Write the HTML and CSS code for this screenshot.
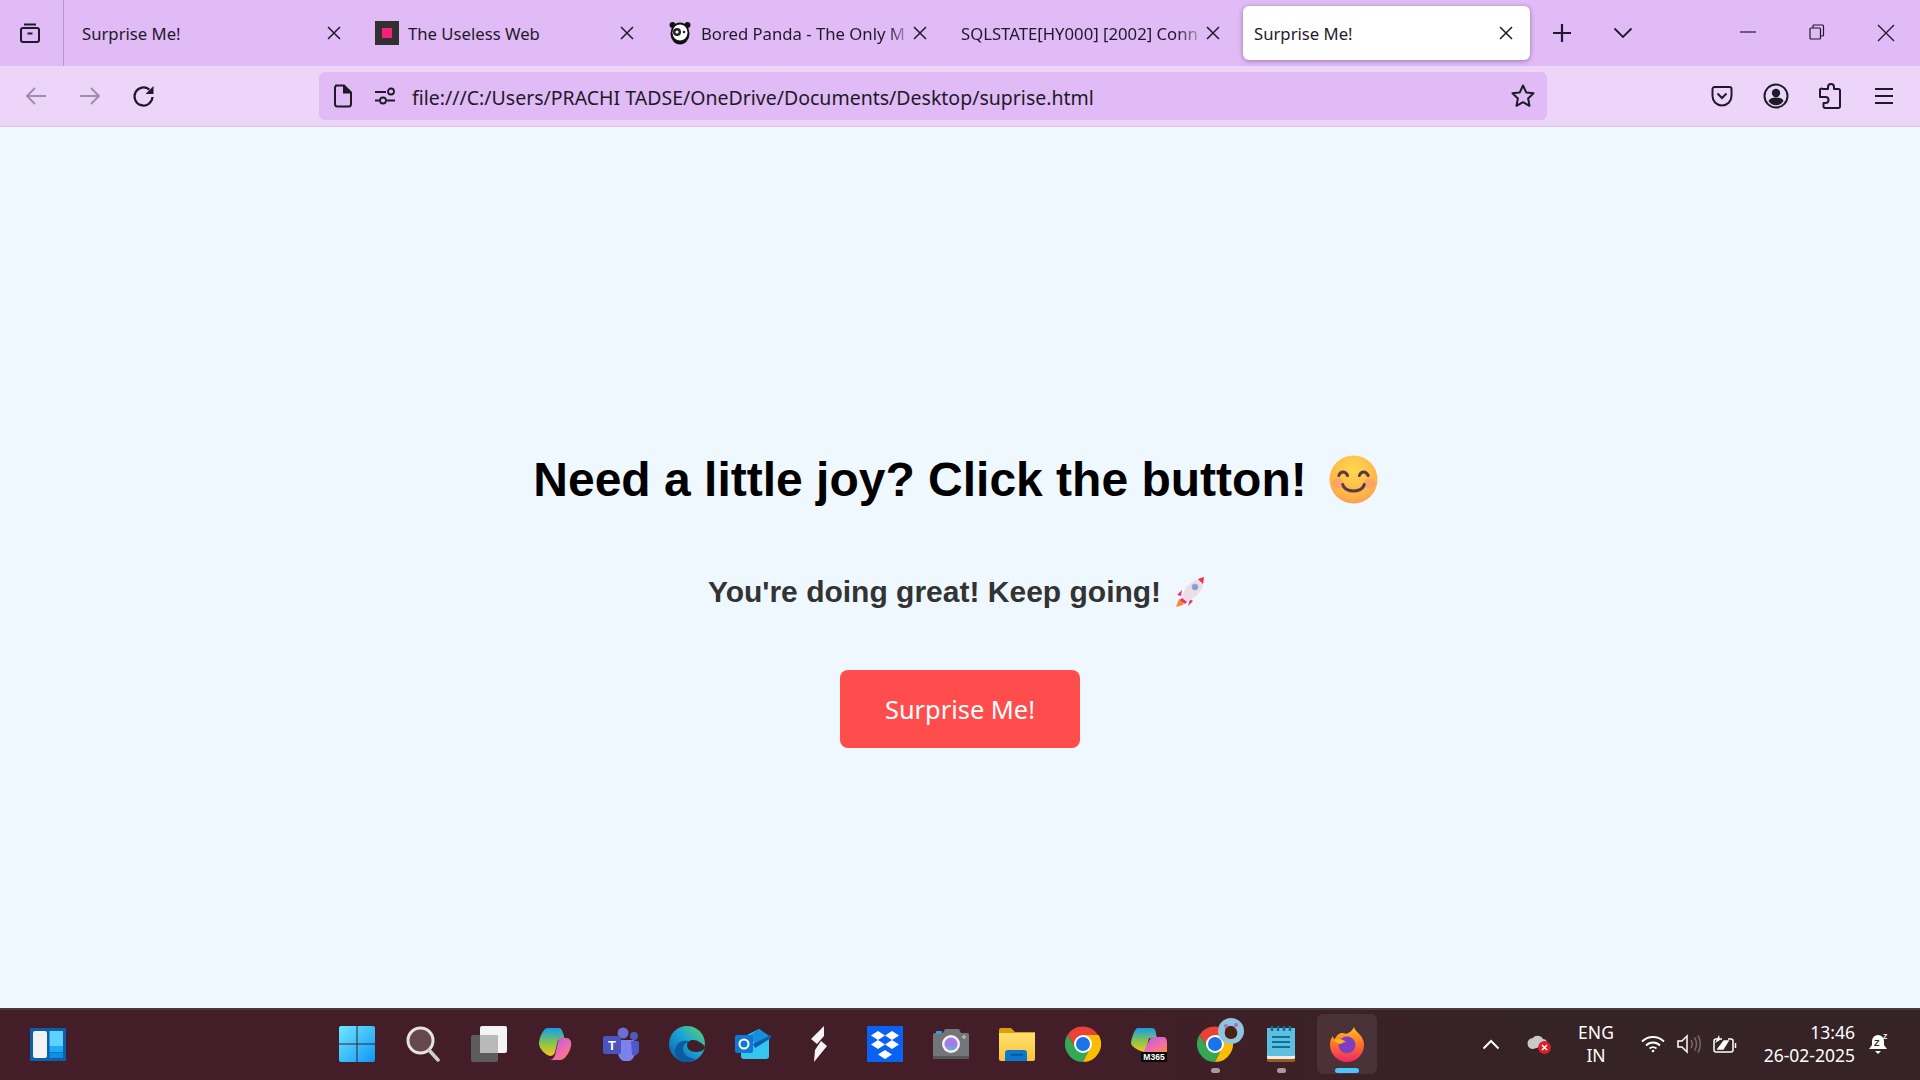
FILE: index.html
```html
<!DOCTYPE html>
<html>
<head>
    <title>Surprise Me!</title>
    <link rel="stylesheet" href="styles.css">
</head>
<body>
    <svg class="defs" width="0" height="0">
        <defs>
            <symbol id="closeX" viewBox="0 0 14 14"><path d="M1 1l12 12M13 1L1 13" fill="none" stroke="currentColor" stroke-width="1.5"/></symbol>
            <symbol id="chromeLogo" viewBox="0 0 36 36">
                <path d="M18 18V10H33.6A18 18 0 0 0 2.4 9L11 22Z" fill="#ea4335"/>
                <path d="M2.4 9A18 18 0 0 0 18 36L25 22H11Z" fill="#34a853"/>
                <path d="M33.6 9H18V18L25 22L18 36A18 18 0 0 0 33.6 9Z" fill="#fbbc04"/>
                <circle cx="18" cy="18" r="9" fill="#fff"/>
                <circle cx="18" cy="18" r="7" fill="#1a73e8"/>
            </symbol>
            <linearGradient id="winBlue" x1="0" y1="0" x2="1" y2="1"><stop offset="0" stop-color="#6fe8ff"/><stop offset="1" stop-color="#0f97f5"/></linearGradient>
            <linearGradient id="copilotLeft" x1="0" y1="0" x2="0" y2="1"><stop offset="0" stop-color="#0f9ff0"/><stop offset=".55" stop-color="#8bc34a"/><stop offset="1" stop-color="#f5c518"/></linearGradient>
            <linearGradient id="copilotRight" x1="0" y1="0" x2="1" y2="1"><stop offset="0" stop-color="#a45fe0"/><stop offset=".6" stop-color="#f06ab0"/><stop offset="1" stop-color="#ff8a3c"/></linearGradient>
            <linearGradient id="edgeGrad" x1="0" y1="1" x2="1" y2="0"><stop offset="0" stop-color="#0c59a4"/><stop offset=".55" stop-color="#1ba5d8"/><stop offset="1" stop-color="#5fd660"/></linearGradient>
            <linearGradient id="folderGrad" x1="0" y1="0" x2="0" y2="1"><stop offset="0" stop-color="#ffdf70"/><stop offset="1" stop-color="#fcc437"/></linearGradient>
            <linearGradient id="foxGrad" x1="0" y1="0" x2="0" y2="1"><stop offset="0" stop-color="#ffc21f"/><stop offset=".55" stop-color="#ff6a2a"/><stop offset="1" stop-color="#f0246b"/></linearGradient>
            <radialGradient id="smileGrad" cx=".5" cy=".3" r=".8"><stop offset="0" stop-color="#ffd84f"/><stop offset=".7" stop-color="#ffb347"/><stop offset="1" stop-color="#f98a6a"/></radialGradient>
        </defs>
    </svg>

    <div class="tabbar">
        <div class="tab-view">
            <svg width="24" height="24" viewBox="0 0 24 24" fill="none" stroke="currentColor" stroke-width="2"><path d="M6 3.500h12M3 9a2 2 0 0 1 2-2h14a2 2 0 0 1 2 2v10a2 2 0 0 1-2 2H5a2 2 0 0 1-2-2z"/><path d="M9.500 12.500h5"/></svg>
        </div>
        <div class="tabs">
            <div class="tab"><span class="tab-title">Surprise Me!</span><svg class="tab-close" width="14" height="14"><use href="#closeX"/></svg></div>
            <div class="tab">
                <svg class="favicon" width="24" height="24" viewBox="0 0 24 24"><rect width="24" height="24" fill="#333033"/><rect x="7" y="7" width="10" height="10" fill="#f3237d"/></svg>
                <span class="tab-title">The Useless Web</span><svg class="tab-close" width="14" height="14"><use href="#closeX"/></svg>
            </div>
            <div class="tab">
                <svg class="favicon" width="24" height="24" viewBox="0 0 24 24"><circle cx="4.500" cy="4" r="3" fill="#111"/><circle cx="19.500" cy="4" r="3" fill="#111"/><ellipse cx="12" cy="12.500" rx="9.500" ry="11" fill="#111"/><ellipse cx="12" cy="11.500" rx="7.500" ry="8" fill="#fff"/><circle cx="9" cy="11" r="4" fill="#222"/><circle cx="9" cy="11" r="1.600" fill="#fff"/><circle cx="16" cy="11" r="1.300" fill="#222"/></svg>
                <span class="tab-title fade">Bored Panda - The Only M</span><svg class="tab-close" width="14" height="14"><use href="#closeX"/></svg>
            </div>
            <div class="tab"><span class="tab-title fade">SQLSTATE[HY000] [2002] Conn</span><svg class="tab-close" width="14" height="14"><use href="#closeX"/></svg></div>
            <div class="tab tab-active"><span class="tab-title">Surprise Me!</span><svg class="tab-close" width="14" height="14"><use href="#closeX"/></svg></div>
        </div>
        <div class="tab-new">
            <svg width="20" height="20" viewBox="0 0 20 20"><path d="M10 1v18M1 10h18" stroke="currentColor" stroke-width="2.200"/></svg>
        </div>
        <div class="tab-list">
            <svg width="20" height="12" viewBox="0 0 20 12"><path d="M1.500 1.500L10 10l8.500-8.500" fill="none" stroke="currentColor" stroke-width="1.800"/></svg>
        </div>
        <div class="window-btns">
            <div class="window-btn"><svg width="16" height="16" viewBox="0 0 16 16"><path d="M0 8h16" stroke="currentColor" stroke-width="1.200"/></svg></div>
            <div class="window-btn"><svg width="16" height="16" viewBox="0 0 16 16" fill="none" stroke="currentColor" stroke-width="1.200"><rect x="1" y="4" width="10.500" height="11" rx="1"/><path d="M4 4V2a1 1 0 0 1 1-1h8.500a1 1 0 0 1 1 1v9a1 1 0 0 1-1 1h-2"/></svg></div>
            <div class="window-btn"><svg width="18" height="18" viewBox="0 0 18 18"><path d="M1 1l16 16M17 1L1 17" stroke="currentColor" stroke-width="1.300"/></svg></div>
        </div>
    </div>

    <div class="toolbar">
        <div class="tool-btn tool-off"><svg width="22" height="20" viewBox="0 0 22 20" fill="none" stroke="currentColor" stroke-width="2"><path d="M21 10H2M10 2l-8 8 8 8"/></svg></div>
        <div class="tool-btn tool-off"><svg width="22" height="20" viewBox="0 0 22 20" fill="none" stroke="currentColor" stroke-width="2"><path d="M1 10h19M12 2l8 8-8 8"/></svg></div>
        <div class="tool-btn"><svg width="24" height="24" viewBox="0 0 24 24"><path d="M20.500 13a9 9 0 1 1-3.200-7.400" fill="none" stroke="currentColor" stroke-width="2.200"/><path d="M21.500 2v8h-8z" fill="currentColor"/></svg></div>

        <div class="urlbar">
            <svg class="url-icon" width="20" height="24" viewBox="0 0 20 24" fill="none" stroke="currentColor" stroke-width="2"><path d="M3 1.500h8l7 7V20a2.500 2.500 0 0 1-2.500 2.500h-11A2.500 2.500 0 0 1 2 20V3.500z"/><path d="M11 1.500V8.500h7" fill="currentColor"/></svg>
            <svg class="url-icon url-perm" width="22" height="18" viewBox="0 0 22 18" fill="none" stroke="currentColor" stroke-width="1.800"><path d="M1 5h11M1 13.500h4.500M12.500 13.500H21"/><circle cx="17" cy="4.500" r="3"/><circle cx="9" cy="13.500" r="3"/></svg>
            <span class="url-text">file:///C:/Users/PRACHI TADSE/OneDrive/Documents/Desktop/suprise.html</span>
            <svg width="26" height="26" viewBox="0 0 26 26"><path d="M13 2.500l3.200 6.900 7.300.9-5.400 5.100 1.400 7.400L13 19.200l-6.500 3.600 1.400-7.400-5.400-5.100 7.300-.9z" fill="none" stroke="currentColor" stroke-width="2" stroke-linejoin="round"/></svg>
        </div>

        <div class="tool-right">
            <div class="tool-btn"><svg width="22" height="22" viewBox="0 0 22 22" fill="none" stroke="currentColor" stroke-width="2"><path d="M3.500 2h15A2 2 0 0 1 20.500 4v7a9.500 9.500 0 0 1-19 0V4a2 2 0 0 1 2-2z"/><path d="M6.500 8.500L11 13l4.500-4.500"/></svg></div>
            <div class="tool-btn"><svg width="26" height="26" viewBox="0 0 26 26"><circle cx="13" cy="13" r="11.500" fill="none" stroke="currentColor" stroke-width="2"/><circle cx="13" cy="10" r="4.200" fill="currentColor"/><path d="M5.500 18c1-2.500 4-3.500 7.500-3.500s6.500 1 7.500 3.500c-2 3-4.500 4.200-7.500 4.200S7.500 21 5.500 18z" fill="currentColor"/></svg></div>
            <div class="tool-btn"><svg width="22" height="26" viewBox="0 0 22 26" fill="none" stroke="currentColor" stroke-width="2" stroke-linejoin="round"><path d="M9 6V4a3 3 0 0 1 6 0v2h4.500a1.500 1.500 0 0 1 1.500 1.500V23.500a1.500 1.500 0 0 1-1.500 1.500H6a1.500 1.500 0 0 1-1.500-1.500V20h2a3 3 0 0 0 0-6h-5.500v-6.500A1.500 1.500 0 0 1 3.500 6z"/></svg></div>
            <div class="tool-btn"><svg width="20" height="18" viewBox="0 0 20 18"><path d="M1 2h18M1 9h18M1 16h18" stroke="currentColor" stroke-width="2"/></svg></div>
        </div>
    </div>

    <div class="page">
        <h1>Need a little joy? Click the button!<svg class="emoji-smile" width="49" height="49" viewBox="0 0 50 50"><ellipse cx="25" cy="25" rx="24.500" ry="24.500" fill="url(#smileGrad)"/><ellipse cx="9" cy="29" rx="6" ry="5" fill="#f78a8a" opacity=".45"/><ellipse cx="41" cy="29" rx="6" ry="5" fill="#f78a8a" opacity=".45"/><path d="M10 21c1.500-5 7-5 9 0M31 21c1.500-5 7-5 9 0M14 30c2 9 20 9 22 0" fill="none" stroke="#5a3a4a" stroke-width="3" stroke-linecap="round"/></svg></h1>
        <p class="message">You're doing great! Keep going!<svg class="emoji-rocket" width="32" height="30" viewBox="0 0 32 30"><path d="M5 22l-3 8 7-2 1-4z" fill="#f78a2c"/><path d="M8 13l-5 5 4 1zM16 22l-2 7 5-5z" fill="#ee2f6b"/><path d="M8 21C9 12 17 3 30 0c1 12-8 21-17 25z" fill="#ecdde6"/><path d="M8 21l5 4-2 2-5-4z" fill="#ee2f6b"/><path d="M24 2l6-2-1 7z" fill="#ee2f4b"/><circle cx="21" cy="10" r="3" fill="#6aa6e8" stroke="#b9a7c0"/></svg></p>
        <button class="surprise-btn">Surprise Me!</button>
    </div>

    <div class="taskbar">
        <div class="widgets">
            <svg width="36" height="33" viewBox="0 0 36 33"><rect width="36" height="33" rx="1" fill="#0b5fad"/><rect x="3" y="3" width="14" height="27" rx="2" fill="#f3f3f3"/><rect x="19.500" y="3" width="13.500" height="15" fill="#5fd2fb"/><rect x="19.500" y="18" width="13.500" height="6" fill="#1fa8f5"/><rect x="19.500" y="24.500" width="13.500" height="5.500" fill="#0c8fe0"/></svg>
        </div>
        <div class="task-icons">
            <div class="task-icon">
                <svg width="36" height="36" viewBox="0 0 36 36" fill="url(#winBlue)"><path d="M2 0h15.500v17.500H0V2a2 2 0 0 1 2-2zM18.500 0H34a2 2 0 0 1 2 2v15.500H18.500zM0 18.500h17.500V36H2a2 2 0 0 1-2-2zM18.500 18.500H36V34a2 2 0 0 1-2 2H18.500z"/></svg>
            </div>
            <div class="task-icon">
                <svg width="34" height="36" viewBox="0 0 34 36"><circle cx="14.500" cy="14.500" r="12.500" fill="#66474f" stroke="#e4e4e4" stroke-width="3"/><path d="M23 24l9 10" stroke="#cfcfcf" stroke-width="3.500" stroke-linecap="round"/></svg>
            </div>
            <div class="task-icon">
                <svg width="36" height="36" viewBox="0 0 36 36"><rect y="9" width="27" height="27" rx="2" fill="#5c5c5c"/><rect x="9" width="27" height="27" rx="2" fill="#f4f4f4"/><rect x="9" y="9" width="18" height="18" fill="#b9b9b9"/></svg>
            </div>
            <div class="task-icon">
                <svg width="34" height="34" viewBox="0 0 34 34"><path d="M9 1h12c2 0 3 2 4 5l2 7H20l-3 12c-1 3-3 4-5 4-5-1-11-8-11-12C1 10 6 1 9 1z" fill="url(#copilotLeft)"/><path d="M21 11h7c4 0 6 3 5 8-1 6-6 14-11 14H11c3 0 5-2 6-5z" fill="url(#copilotRight)"/></svg>
            </div>
            <div class="task-icon">
                <svg width="36" height="34" viewBox="0 0 36 34"><circle cx="20" cy="6" r="5.500" fill="#6a6fd0"/><circle cx="31" cy="9" r="4" fill="#5259b8"/><path d="M13 13h17a2 2 0 0 1 2 2v11a8.500 8.500 0 0 1-17 0z" fill="#7b83eb"/><path d="M28 14h6a2 2 0 0 1 2 2v8a5 5 0 0 1-7 4z" fill="#5059c9"/><rect y="9" width="18" height="18" rx="2" fill="#4b53bc"/><text class="teams-t" x="9" y="23">T</text></svg>
            </div>
            <div class="task-icon">
                <svg width="36" height="36" viewBox="0 0 36 36"><circle cx="18" cy="18" r="18" fill="url(#edgeGrad)"/><path d="M36 20c0 3-3 6-9 6-6 0-9-3-9-7 0-3 3-5 6-5 5 0 8 3 12 6z" fill="#3f2029"/><path d="M14 36C6 33 4 25 8 19c3-5 10-5 13-3-4 0-7 3-7 7 0 5 5 9 12 10-4 3-8 4-12 3z" fill="#0c5aa0"/></svg>
            </div>
            <div class="task-icon">
                <svg width="36" height="36" viewBox="0 0 36 36"><path d="M6 12L24 3l10 8v19a3 3 0 0 1-3 3H9a3 3 0 0 1-3-3z" fill="#35c6ef"/><path d="M14 10L24 3l12 8-14 9z" fill="#1490df"/><path d="M18 18l18-9v3L20 22z" fill="#0a5ea8"/><rect y="9" width="18" height="18" rx="2" fill="#0f78d4"/><circle cx="9" cy="18" r="4.500" fill="none" stroke="#fff" stroke-width="2"/></svg>
            </div>
            <div class="task-icon">
                <svg width="16" height="36" viewBox="0 0 16 36" fill="#f5f5f5"><path d="M13 0L0 13l6 5 7-8zM16 20l-6-5-6 9-1 12z"/></svg>
            </div>
            <div class="task-icon">
                <svg width="36" height="36" viewBox="0 0 36 36"><rect width="36" height="36" fill="#0a62f5"/><path d="M11 5l7 4.500-7 4.500-7-4.500zM25 5l7 4.500-7 4.500-7-4.500zM11 14l7 4.500-7 4.500-7-4.500zM25 14l7 4.500-7 4.500-7-4.500zM18 24l7 4.500-7 4.500-7-4.500z" fill="#fff"/></svg>
            </div>
            <div class="task-icon">
                <svg width="36" height="30" viewBox="0 0 36 30"><rect x="0" y="4" width="36" height="26" rx="2" fill="#737579"/><path d="M10 4l2-4h14l2 4z" fill="#737579"/><rect x="3" y="2" width="6" height="3" rx="1" fill="#2aa2e0"/><rect y="27" width="36" height="3" fill="#55575a"/><circle cx="18" cy="15" r="9" fill="#f2f2f2"/><circle cx="18" cy="15" r="6.500" fill="#a67de6"/><path d="M13 18a6.500 6.500 0 0 0 11 0z" fill="#5fb0e8"/><path d="M29 8h4M31 6v4" stroke="#b8b8b8" stroke-width="1.500"/></svg>
            </div>
            <div class="task-icon">
                <svg width="36" height="33" viewBox="0 0 36 33"><path d="M0 2a2 2 0 0 1 2-2h10l4 4h20v6H0z" fill="#dba006"/><path d="M0 5h36v26a2 2 0 0 1-2 2H2a2 2 0 0 1-2-2z" fill="url(#folderGrad)"/><path d="M6 33V25a3 3 0 0 1 3-3h16a3 3 0 0 1 3 3v8z" fill="#0a78cc"/><rect x="12" y="26" width="12" height="1.500" fill="#054f8f"/></svg>
            </div>
            <div class="task-icon">
                <svg width="36" height="36"><use href="#chromeLogo"/></svg>
            </div>
            <div class="task-icon">
                <svg width="36" height="36" viewBox="0 0 36 36"><path d="M7 2h14c3 0 4 3 4 6l1 4H18l-3 12c0 2-2 3-5 1C6 24 0 20 0 17 1 10 4 2 7 2z" fill="url(#copilotLeft)"/><path d="M20 11h12c3 0 4 2 4 6v9H10c3 0 4-2 5-5z" fill="url(#copilotRight)"/><rect x="10" y="26" width="26" height="10" rx="1" fill="#0a0a0a"/><text class="m365" x="23" y="34">M365</text></svg>
            </div>
            <div class="task-icon task-badged task-running">
                <svg width="36" height="36"><use href="#chromeLogo"/></svg>
                <svg class="profile-badge" width="26" height="26" viewBox="0 0 26 26"><circle cx="13" cy="13" r="13" fill="#8fc3e0"/><path d="M7 13c0-3 3-5 6-5s5 2 6 5c1 4-1 8-6 8s-7-4-6-8z" fill="#4a2412"/><circle cx="8" cy="8" r="2" fill="#b06bc0"/><circle cx="18" cy="7" r="2" fill="#b06bc0"/></svg>
            </div>
            <div class="task-icon task-running">
                <svg width="28" height="36" viewBox="0 0 28 36"><rect y="2" width="28" height="34" rx="1.500" fill="#9a5a26"/><rect y="2" width="28" height="31" rx="1.500" fill="#f1ece6"/><rect y="2" width="28" height="28" rx="1.500" fill="#5cbfe0"/><path d="M5 0v5M11 0v5M17 0v5M23 0v5" stroke="#0f6f94" stroke-width="2.500"/><path d="M5 11h18M5 16h18M5 21h18" stroke="#0f6f94" stroke-width="2"/></svg>
            </div>
            <div class="task-icon task-active">
                <svg width="34" height="35" viewBox="0 0 34 35"><path d="M24 0c1 4 4 5 7 9 2 3 3 6 3 9a17 17 0 0 1-34 0c0-4 1-7 3-9 0 2 1 3 2 3 1-3 3-5 6-6 2 0 4 0 5 1 3-1 6-3 8-7z" fill="url(#foxGrad)"/><circle cx="17" cy="18" r="8.500" fill="#7d3fc0"/><path d="M4 13c3-2 9-1 12 2-3 0-4 1-5 2-3 0-6-2-7-4z" fill="#ffb01f"/></svg>
            </div>
        </div>
        <div class="tray">
            <svg class="tray-chevron" width="18" height="11" viewBox="0 0 18 11"><path d="M1.500 9.500L9 2l7.500 7.500" fill="none" stroke="#fff" stroke-width="2"/></svg>
            <svg class="tray-cloud" width="24" height="20" viewBox="0 0 24 20"><path d="M6 15a5.500 5.500 0 0 1 0-11c2-3 8-3 10 1 3 0 5 3 4 6z" fill="#c9c9c9"/><circle cx="17.500" cy="13.500" r="6.500" fill="#d91f2b"/><path d="M15 11l5 5M20 11l-5 5" stroke="#fff" stroke-width="1.500"/></svg>
            <div class="tray-lang">ENG<br>IN</div>
            <svg class="tray-wifi" width="24" height="18" viewBox="0 0 24 18" fill="none" stroke="#fff" stroke-width="1.800"><path d="M1 6.500c6-6 16-6 22 0M5 10.500c4-4 10-4 14 0M8.500 13.500c2-1.500 5-1.500 7 0"/><circle cx="12" cy="16" r="1.300" fill="#fff" stroke="none"/></svg>
            <svg class="tray-volume" width="24" height="20" viewBox="0 0 24 20" fill="none" stroke="#fff" stroke-width="1.500"><path d="M1 7v6h4l5 5V2L5 7z"/><path d="M14 6c1.500 2.500 1.500 5.500 0 8M17.500 3.500c2.500 4 2.500 9 0 13M21 1.500c3 5 3 12 0 17" stroke="#77686a"/></svg>
            <svg class="tray-battery" width="24" height="20" viewBox="0 0 24 20" fill="none" stroke="#fff" stroke-width="1.500"><path d="M9 5H3a2 2 0 0 0-2 2v9a2 2 0 0 0 2 2h15a2 2 0 0 0 2-2V7a2 2 0 0 0-2-2h-3"/><path d="M22.500 9v5"/><path d="M5 15L11 7h4l-5 8z" fill="#fff"/><path d="M2 9l4-8 1 5z" fill="#fff" stroke="none"/></svg>
            <div class="tray-clock">13:46<br>26-02-2025</div>
            <svg class="tray-bell" width="21" height="22" viewBox="0 0 21 22"><path d="M10 2a6 6 0 0 0-6 6v4l-3 4h18l-3-4V8a6 6 0 0 0-6-6z" fill="#fff"/><path d="M7 18h6l-3 3z" fill="#fff"/><text class="bell-z" x="6" y="13">Z</text><text class="bell-z bell-z-small" x="15" y="6">Z</text></svg>
        </div>
    </div>
</body>
</html>
```

FILE: styles.css
```css
body {
    font-family: "Noto Sans", sans-serif;
    background-color: #f0f8ff;
    margin: 0;
    padding: 0;
    height: 100vh;
    display: flex;
    flex-direction: column;
    overflow: hidden;
    color: #1f1a29;
}

.defs {
    position: absolute;
}

/* tab strip */
.tabbar {
    height: 66px;
    display: flex;
    align-items: center;
    background-color: #e0bbf6;
    flex-shrink: 0;
}

.tab-view {
    width: 64px;
    height: 66px;
    box-sizing: border-box;
    padding-right: 4px;
    border-right: 1px solid #b999cd;
    display: flex;
    align-items: center;
    justify-content: center;
}

.tabs {
    display: flex;
    gap: 6px;
    padding-left: 7px;
}

.tab {
    width: 287px;
    height: 54px;
    box-sizing: border-box;
    padding: 0 17px 0 11px;
    display: flex;
    align-items: center;
    font-size: 16.7px;
}

.tab-active {
    background-color: #fff;
    border-radius: 6px;
    box-shadow: 0 1px 5px rgba(60, 30, 90, 0.45);
}

.favicon {
    margin-right: 9px;
    flex-shrink: 0;
}

.tab-title {
    flex: 1;
    overflow: hidden;
    white-space: nowrap;
}

.tab-title.fade {
    -webkit-mask-image: linear-gradient(to right, #000 88%, transparent 100%);
    mask-image: linear-gradient(to right, #000 88%, transparent 100%);
}

.tab-close {
    flex-shrink: 0;
}

.tab-new {
    width: 52px;
    margin-left: 6px;
    display: flex;
    justify-content: center;
}

.tab-list {
    width: 70px;
    display: flex;
    justify-content: center;
}

.window-btns {
    margin-left: auto;
    display: flex;
}

.window-btn {
    width: 69px;
    display: flex;
    justify-content: center;
}

/* nav bar */
.toolbar {
    height: 60px;
    padding-left: 9px;
    padding-right: 9px;
    display: flex;
    align-items: center;
    background-color: #edd5fa;
    border-bottom: 1px solid #dcc0ee;
    flex-shrink: 0;
}

.tool-btn {
    width: 54px;
    display: flex;
    justify-content: center;
    align-items: center;
}

.tool-off {
    color: #9f8fab;
}

.urlbar {
    margin-left: 148px;
    width: 1228px;
    height: 48px;
    box-sizing: border-box;
    padding: 0 11px 0 14px;
    display: flex;
    align-items: center;
    background-color: #e0bbf6;
    border-radius: 6px;
}

.url-perm {
    margin-left: 21px;
}

.url-text {
    flex: 1;
    margin-left: 16px;
    padding-top: 2px;
    font-size: 19.5px;
    white-space: nowrap;
}

.tool-right {
    margin-left: auto;
    display: flex;
}

/* page content */
.page {
    flex: 1;
    display: flex;
    flex-direction: column;
    align-items: center;
    padding-top: 325px;
    box-sizing: border-box;
    font-family: "Liberation Sans", Arial, sans-serif;
}

h1 {
    margin: 0;
    font-size: 48px;
    line-height: 55px;
    color: #000;
    display: flex;
    align-items: center;
}

.emoji-smile {
    margin: 0 9px 0 22px;
}

.message {
    margin: 66px 0 0;
    font-size: 30px;
    line-height: 37px;
    font-weight: bold;
    color: #333;
    display: flex;
    align-items: center;
}

.emoji-rocket {
    margin: 0 6px 0 13px;
}

.surprise-btn {
    margin-top: 60px;
    width: 240px;
    height: 78px;
    background-color: #ff4d4d;
    color: #fff;
    border: none;
    border-radius: 8px;
    font-family: "Noto Sans", sans-serif;
    font-size: 25.4px;
    cursor: pointer;
}

/* windows taskbar */
.taskbar {
    height: 72px;
    flex-shrink: 0;
    box-sizing: border-box;
    border-top: 2px solid #4a3a3e;
    padding-bottom: 2px;
    display: flex;
    align-items: center;
    background: linear-gradient(to right, #431d28, #431e28 55%, #352325 80%);
    color: #fff;
    position: relative;
}

.widgets {
    padding-left: 30px;
    width: 324px;
    box-sizing: border-box;
    display: flex;
}

.task-icons {
    display: flex;
}

.task-icon {
    width: 66px;
    height: 60px;
    display: flex;
    align-items: center;
    justify-content: center;
    position: relative;
    box-sizing: border-box;
}

.task-active {
    background-color: rgba(255, 255, 255, 0.08);
    border-radius: 6px;
    width: 60px;
    margin-left: 3px;
}

.task-active::after,
.task-running::after {
    content: "";
    position: absolute;
    bottom: 1px;
    height: 5px;
    border-radius: 3px;
}

.task-active::after {
    width: 24px;
    background-color: #4cc2ff;
}

.task-running::after {
    width: 9px;
    background-color: #a89a9c;
}

.profile-badge {
    position: absolute;
    top: 4px;
    left: 36px;
}

.teams-t {
    font-family: "Liberation Sans", sans-serif;
    font-size: 13px;
    font-weight: bold;
    fill: #fff;
    text-anchor: middle;
}

.m365 {
    font-family: "Liberation Sans", sans-serif;
    font-size: 8.500px;
    font-weight: bold;
    fill: #fff;
    text-anchor: middle;
}

.tray {
    position: absolute;
    left: 1482px;
    top: 0;
    bottom: 2px;
    display: flex;
    align-items: center;
    font-size: 17.500px;
    line-height: 23px;
}

.tray-cloud {
    margin-left: 27px;
}

.tray-lang {
    width: 50px;
    margin-left: 20px;
    text-align: center;
}

.tray-wifi {
    margin-left: 20px;
}

.tray-volume {
    margin-left: 12px;
}

.tray-battery {
    margin-left: 12px;
}

.tray-clock {
    width: 118px;
    text-align: right;
}

.tray-bell {
    margin-left: 13px;
}

.bell-z {
    font-family: "Liberation Sans", sans-serif;
    font-size: 9px;
    font-weight: bold;
    fill: #352325;
}

.bell-z-small {
    fill: #fff;
    font-size: 7px;
}
```
